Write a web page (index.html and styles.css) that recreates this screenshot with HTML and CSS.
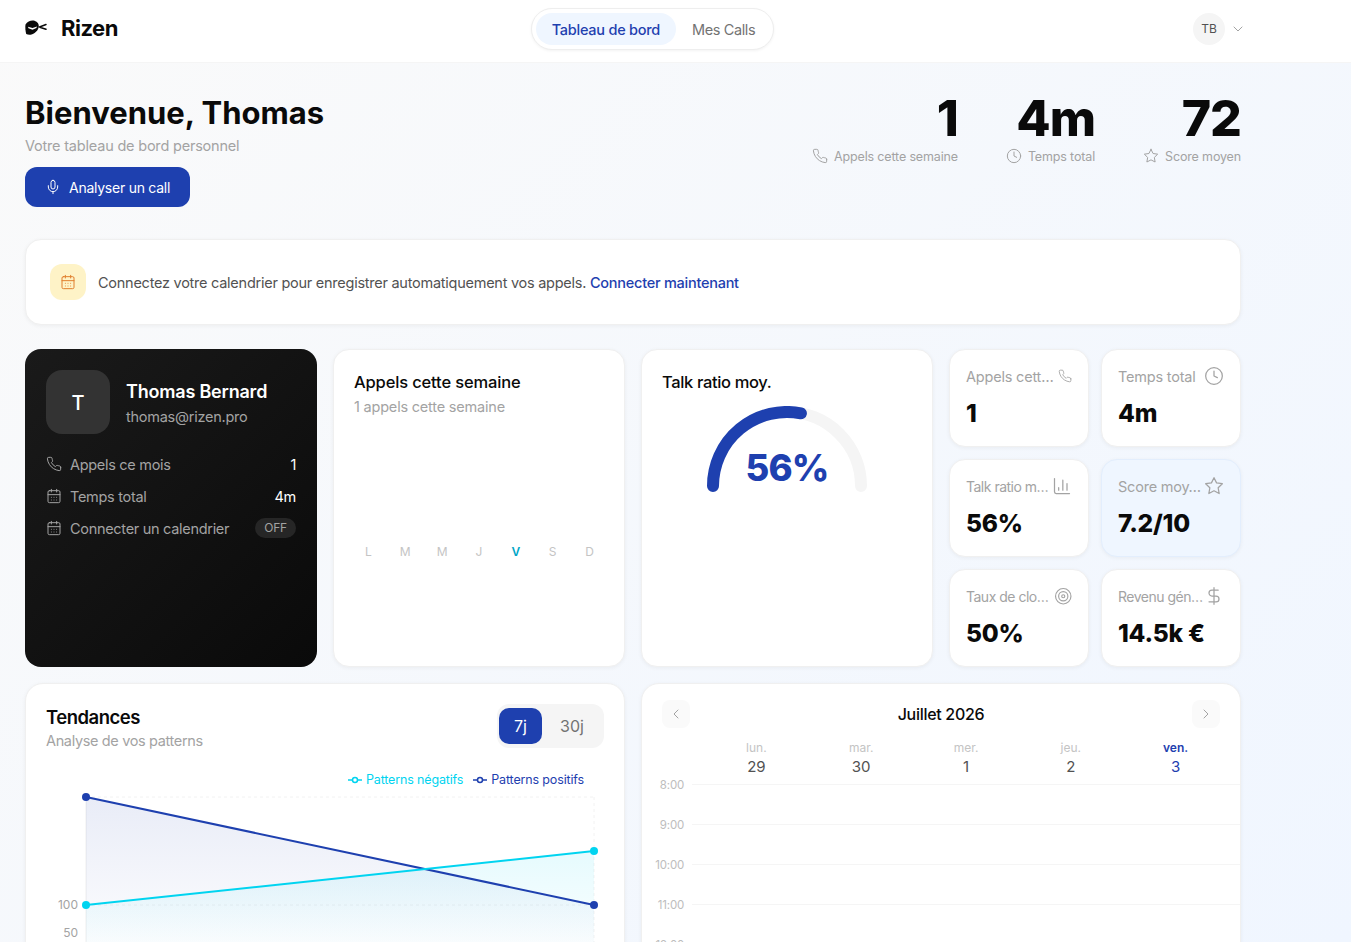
FILE: index.html
```html
<!DOCTYPE html>
<html lang="fr">
<head>
    <meta charset="utf-8">
    <title>Rizen - Tableau de bord</title>
    <link rel="stylesheet" href="styles.css">
</head>
<body>
    <!-- Icon set -->
    <svg class="icon-defs" width="0" height="0">
        <symbol id="i-phone" viewBox="0 0 24 24"><path d="M22 16.92v3a2 2 0 0 1-2.18 2 19.79 19.79 0 0 1-8.63-3.07 19.5 19.5 0 0 1-6-6 19.79 19.79 0 0 1-3.07-8.67A2 2 0 0 1 4.11 2h3a2 2 0 0 1 2 1.72 12.84 12.84 0 0 0 .7 2.81 2 2 0 0 1-.45 2.11L8.09 9.91a16 16 0 0 0 6 6l1.27-1.27a2 2 0 0 1 2.11-.45 12.84 12.84 0 0 0 2.81.7A2 2 0 0 1 22 16.92z"/></symbol>
        <symbol id="i-clock" viewBox="0 0 24 24"><circle cx="12" cy="12" r="10"/><path d="M12 6v6l4 2"/></symbol>
        <symbol id="i-star" viewBox="0 0 24 24"><path d="M12 2l3.09 6.26L22 9.27l-5 4.87 1.18 6.88L12 17.77l-6.18 3.25L7 14.14 2 9.27l6.91-1.01L12 2z"/></symbol>
        <symbol id="i-mic" viewBox="0 0 24 24"><path d="M12 2a3 3 0 0 0-3 3v7a3 3 0 0 0 6 0V5a3 3 0 0 0-3-3z"/><path d="M19 10v2a7 7 0 0 1-14 0v-2"/><path d="M12 19v3"/></symbol>
        <symbol id="i-calendar" viewBox="0 0 24 24"><path d="M8 2v4M16 2v4"/><rect x="3" y="4" width="18" height="18" rx="2"/><path d="M3 10h18M8 14h.01M12 14h.01M16 14h.01M8 18h.01M12 18h.01M16 18h.01"/></symbol>
        <symbol id="i-chart" viewBox="0 0 24 24"><path d="M3 3v16a2 2 0 0 0 2 2h16M18 17V9M13 17V5M8 17v-3"/></symbol>
        <symbol id="i-target" viewBox="0 0 24 24"><circle cx="12" cy="12" r="10"/><circle cx="12" cy="12" r="6"/><circle cx="12" cy="12" r="2"/></symbol>
        <symbol id="i-dollar" viewBox="0 0 24 24"><path d="M12 2v20M17 5H9.5a3.5 3.5 0 0 0 0 7h5a3.5 3.5 0 0 1 0 7H6"/></symbol>
        <symbol id="i-down" viewBox="0 0 24 24"><path d="M6 9l6 6 6-6"/></symbol>
        <symbol id="i-left" viewBox="0 0 24 24"><path d="M15 18l-6-6 6-6"/></symbol>
        <symbol id="i-right" viewBox="0 0 24 24"><path d="M9 18l6-6-6-6"/></symbol>
    </svg>

    <div class="page">
        <header class="topbar">
            <div class="brand">
                <svg class="brand-logo" viewBox="0 0 22 16" width="22" height="16">
                    <path d="M.5 4.500C2.500 1.200 6.500 0 9.500 .8c3 .8 4.500 3.300 4.300 5.700-.3 3.500-3.500 6.700-7.300 8-2 .5-3.800.2-5.300-.5C.5 11 0 7.500.5 4.500z" fill="#0a0a0a"/>
                    <path d="M3 6.800l4.500 1.300 4.500-1.600-.6 1.600L7.500 9.700 3.500 8.300z" fill="#fff"/>
                    <path d="M14.500 7L21 4.500M15.500 7.500l5.500 1.700" fill="none" stroke="#0a0a0a" stroke-width="1.500" stroke-linecap="round"/>
                </svg>
                <span class="brand-name">Rizen</span>
            </div>
            <nav class="main-nav">
                <a class="nav-item active">Tableau de bord</a>
                <a class="nav-item">Mes Calls</a>
            </nav>
            <div class="user-menu">
                <div class="user-avatar">TB</div>
                <svg class="icon chevron"><use href="#i-down"/></svg>
            </div>
        </header>

        <main class="content">
            <section class="hero">
                <div class="hero-left">
                    <h1>Bienvenue, Thomas</h1>
                    <p class="hero-sub">Votre tableau de bord personnel</p>
                    <button class="btn-primary"><svg class="icon"><use href="#i-mic"/></svg>Analyser un call</button>
                </div>
                <div class="hero-stats">
                    <div class="hero-stat">
                        <div class="hero-value">1</div>
                        <div class="hero-label"><svg class="icon"><use href="#i-phone"/></svg>Appels cette semaine</div>
                    </div>
                    <div class="hero-stat">
                        <div class="hero-value">4m</div>
                        <div class="hero-label"><svg class="icon"><use href="#i-clock"/></svg>Temps total</div>
                    </div>
                    <div class="hero-stat">
                        <div class="hero-value">72</div>
                        <div class="hero-label"><svg class="icon"><use href="#i-star"/></svg>Score moyen</div>
                    </div>
                </div>
            </section>

            <section class="card banner">
                <div class="banner-icon"><svg class="icon"><use href="#i-calendar"/></svg></div>
                <p>Connectez votre calendrier pour enregistrer automatiquement vos appels. <a href="#">Connecter maintenant</a></p>
            </section>

            <section class="top-grid">
                <div class="profile-card">
                    <div class="profile-head">
                        <div class="profile-avatar">T</div>
                        <div class="profile-info">
                            <div class="profile-name">Thomas Bernard</div>
                            <div class="profile-mail">thomas@rizen.pro</div>
                        </div>
                    </div>
                    <div class="profile-row">
                        <svg class="icon"><use href="#i-phone"/></svg><span class="row-label">Appels ce mois</span><span class="row-value">1</span>
                    </div>
                    <div class="profile-row">
                        <svg class="icon"><use href="#i-calendar"/></svg><span class="row-label">Temps total</span><span class="row-value">4m</span>
                    </div>
                    <div class="profile-row">
                        <svg class="icon"><use href="#i-calendar"/></svg><span class="row-label">Connecter un calendrier</span><span class="row-badge">OFF</span>
                    </div>
                </div>

                <div class="card week-card">
                    <h3>Appels cette semaine</h3>
                    <p class="card-sub">1 appels cette semaine</p>
                    <div class="week-days">
                        <span>L</span><span>M</span><span>M</span><span>J</span><span class="today">V</span><span>S</span><span>D</span>
                    </div>
                </div>

                <div class="card gauge-card">
                    <h3>Talk ratio moy.</h3>
                    <div class="gauge">
                        <svg viewBox="0 0 172 86" width="172" height="86">
                            <path d="M12 80A74 74 0 0 1 160 80" fill="none" stroke="#f5f5f5" stroke-width="12" stroke-linecap="round"/>
                            <path d="M12 80A74 74 0 0 1 99.900 7.300" fill="none" stroke="#1e40af" stroke-width="12" stroke-linecap="round"/>
                        </svg>
                        <div class="gauge-value">56%</div>
                    </div>
                </div>

                <div class="mini-grid">
                    <div class="card mini-card">
                        <div class="mini-top"><span class="mini-label">Appels cett…</span><svg class="icon icon-sm"><use href="#i-phone"/></svg></div>
                        <div class="mini-value">1</div>
                    </div>
                    <div class="card mini-card">
                        <div class="mini-top"><span class="mini-label">Temps total</span><svg class="icon"><use href="#i-clock"/></svg></div>
                        <div class="mini-value">4m</div>
                    </div>
                    <div class="card mini-card">
                        <div class="mini-top"><span class="mini-label tight">Talk ratio m…</span><svg class="icon"><use href="#i-chart"/></svg></div>
                        <div class="mini-value">56%</div>
                    </div>
                    <div class="card mini-card tinted">
                        <div class="mini-top"><span class="mini-label">Score moy…</span><svg class="icon"><use href="#i-star"/></svg></div>
                        <div class="mini-value">7.2/10</div>
                    </div>
                    <div class="card mini-card">
                        <div class="mini-top"><span class="mini-label tight">Taux de clo…</span><svg class="icon icon-md"><use href="#i-target"/></svg></div>
                        <div class="mini-value">50%</div>
                    </div>
                    <div class="card mini-card">
                        <div class="mini-top"><span class="mini-label tight">Revenu gén…</span><svg class="icon"><use href="#i-dollar"/></svg></div>
                        <div class="mini-value">14.5k €</div>
                    </div>
                </div>
            </section>

            <section class="bottom-grid">
                <div class="card trend-card">
                    <div class="trend-head">
                        <div>
                            <h2>Tendances</h2>
                            <p class="card-sub">Analyse de vos patterns</p>
                        </div>
                        <div class="range-toggle">
                            <span class="range active">7j</span>
                            <span class="range">30j</span>
                        </div>
                    </div>
                    <div class="legend">
                        <span class="legend-item neg"><svg width="14" height="8" viewBox="0 0 14 8"><path d="M0 4h14" stroke="currentColor" stroke-width="1.500"/><circle cx="7" cy="4" r="2.500" fill="#fff" stroke="currentColor" stroke-width="1.500"/></svg>Patterns négatifs</span>
                        <span class="legend-item pos"><svg width="14" height="8" viewBox="0 0 14 8"><path d="M0 4h14" stroke="currentColor" stroke-width="1.500"/><circle cx="7" cy="4" r="2.500" fill="#fff" stroke="currentColor" stroke-width="1.500"/></svg>Patterns positifs</span>
                    </div>
                    <svg class="trend-chart" viewBox="0 0 558 200" width="558" height="200">
                        <defs>
                            <linearGradient id="fill-pos" x1="0" y1="0" x2="0" y2="1">
                                <stop offset="0" stop-color="#1e40af" stop-opacity="0.1"/>
                                <stop offset="1" stop-color="#1e40af" stop-opacity="0"/>
                            </linearGradient>
                            <linearGradient id="fill-neg" x1="0" y1="0" x2="0" y2="1">
                                <stop offset="0" stop-color="#00d4f0" stop-opacity="0.1"/>
                                <stop offset="1" stop-color="#00d4f0" stop-opacity="0"/>
                            </linearGradient>
                        </defs>
                        <g stroke="#f2f2f2" stroke-dasharray="3 3" fill="none">
                            <path d="M40 7H548M40 115H548M548 7V171"/>
                        </g>
                        <path d="M40 7V200" stroke="#eeeeee"/>
                        <path d="M40 7L548 115V171H40z" fill="url(#fill-pos)"/>
                        <path d="M40 115L548 61V171H40z" fill="url(#fill-neg)"/>
                        <path d="M40 7L548 115" stroke="#1e40af" stroke-width="2" fill="none"/>
                        <path d="M40 115L548 61" stroke="#00d4f0" stroke-width="2" fill="none"/>
                        <circle cx="40" cy="7" r="4" fill="#1e40af"/>
                        <circle cx="548" cy="115" r="4" fill="#1e40af"/>
                        <circle cx="40" cy="115" r="4" fill="#00d4f0"/>
                        <circle cx="548" cy="61" r="4" fill="#00d4f0"/>
                        <text class="axis" x="32" y="119" text-anchor="end">100</text>
                        <text class="axis" x="32" y="147" text-anchor="end">50</text>
                    </svg>
                </div>

                <div class="card calendar-card">
                    <div class="cal-head">
                        <button class="cal-nav"><svg class="icon"><use href="#i-left"/></svg></button>
                        <span class="cal-title">Juillet 2026</span>
                        <button class="cal-nav"><svg class="icon"><use href="#i-right"/></svg></button>
                    </div>
                    <div class="cal-days">
                        <div class="cal-day"><span>lun.</span><b>29</b></div>
                        <div class="cal-day"><span>mar.</span><b>30</b></div>
                        <div class="cal-day"><span>mer.</span><b>1</b></div>
                        <div class="cal-day"><span>jeu.</span><b>2</b></div>
                        <div class="cal-day today"><span>ven.</span><b>3</b></div>
                    </div>
                    <div class="cal-hour"><span>8:00</span></div>
                    <div class="cal-hour"><span>9:00</span></div>
                    <div class="cal-hour"><span>10:00</span></div>
                    <div class="cal-hour"><span>11:00</span></div>
                    <div class="cal-hour"><span>12:00</span></div>
                </div>
            </section>
        </main>
    </div>
</body>
</html>
```

FILE: styles.css
```css
* {
    box-sizing: border-box;
}

html, body {
    margin: 0;
    height: 100%;
    overflow: hidden;
}

body {
    font-family: Inter, "Liberation Sans", sans-serif;
    color: #0a0a0a;
    background: linear-gradient(135deg, #fafafa 0%, #f0f6ff 100%);
}

h1, h2, h3, p {
    margin: 0;
}

.icon-defs {
    position: absolute;
}

.icon {
    width: 16px;
    height: 16px;
    flex-shrink: 0;
    fill: none;
    stroke: currentColor;
    stroke-width: 1.5;
    stroke-linecap: round;
    stroke-linejoin: round;
}

.page {
    height: 942px;
    overflow: hidden;
}

/* Top bar */
.topbar {
    display: flex;
    align-items: center;
    justify-content: space-between;
    height: 63px;
    padding: 0 105px 5px 25px;
    background: #fff;
    border-bottom: 1px solid #f5f5f5;
}

.brand {
    display: flex;
    align-items: center;
    gap: 14px;
    margin-bottom: 2px;
}

.brand-logo {
    display: block;
}

.brand-name {
    font-size: 22px;
    font-weight: 700;
    letter-spacing: -0.5px;
}

.main-nav {
    display: flex;
    margin-right: 6px;
    padding: 4px;
    background: #fff;
    border: 1px solid #eeeeee;
    border-radius: 21px;
    box-shadow: 0 1px 3px rgba(0,0,0,0.05);
}

.nav-item {
    height: 32px;
    line-height: 33px;
    padding: 0 14px 0 16px;
    font-size: 14.5px;
    letter-spacing: -0.4px;
    color: #737373;
    border-radius: 16px;
}

.nav-item.active {
    padding: 0 16px;
    letter-spacing: -0.25px;
    background: #eff6ff;
    color: #1e40af;
    font-weight: 500;
}

.user-menu {
    display: flex;
    align-items: center;
    gap: 5px;
}

.user-avatar {
    width: 32px;
    height: 32px;
    border-radius: 50%;
    background: #f5f5f5;
    color: #525252;
    font-size: 12px;
    line-height: 32px;
    text-align: center;
}

.chevron {
    color: #a3a3a3;
}

/* Main */
.content {
    padding: 32px 110px 0 25px;
}

.hero {
    display: flex;
    justify-content: space-between;
}

h1 {
    font-size: 31px;
    line-height: 36px;
    font-weight: 700;
}

.hero-sub {
    margin-top: 5px;
    font-size: 14.5px;
    line-height: 20px;
    letter-spacing: -0.2px;
    color: #a3a3a3;
}

.btn-primary {
    display: flex;
    align-items: center;
    gap: 8px;
    height: 40px;
    margin-top: 11px;
    padding: 0 20px;
    border: none;
    border-radius: 12px;
    background: #1e40af;
    color: #fff;
    font-family: inherit;
    font-size: 14px;
    letter-spacing: -0.25px;
}

.hero-stats {
    display: flex;
    gap: 48px;
}

.hero-stat {
    text-align: right;
}

.hero-value {
    font-size: 50px;
    line-height: 46px;
    font-weight: 800;
    letter-spacing: -1px;
}

.hero-label {
    display: flex;
    align-items: center;
    gap: 6px;
    margin-top: 7px;
    font-size: 12.5px;
    letter-spacing: -0.15px;
    color: #a3a3a3;
}

/* Cards */
.card {
    background: #fff;
    border: 1px solid #f0f0f0;
    border-radius: 16px;
    box-shadow: 0 1px 4px rgba(0,0,0,0.05);
}

.banner {
    display: flex;
    align-items: center;
    gap: 12px;
    height: 86px;
    margin-top: 32px;
    padding: 0 24px;
    font-size: 14.5px;
    letter-spacing: -0.255px;
    color: #525252;
}

.banner a {
    color: #1e40af;
    font-weight: 500;
    text-decoration: none;
}

.banner-icon {
    display: flex;
    align-items: center;
    justify-content: center;
    width: 36px;
    height: 36px;
    border-radius: 12px;
    background: #fef3c7;
    color: #e07f2e;
}

.top-grid {
    display: grid;
    grid-template-columns: repeat(4, 292px);
    gap: 16px;
    height: 318px;
    margin-top: 24px;
}

.profile-card {
    padding: 21px;
    border-radius: 16px;
    background: linear-gradient(135deg, #1a1a1a 0%, #0a0a0a 100%);
    color: #fff;
}

.profile-head {
    display: flex;
    align-items: center;
    gap: 16px;
    margin-bottom: 14px;
}

.profile-avatar {
    width: 64px;
    height: 64px;
    border-radius: 16px;
    background: #333;
    font-size: 20px;
    font-weight: 500;
    line-height: 66px;
    text-align: center;
}

.profile-info {
    padding-top: 1px;
}

.profile-name {
    font-size: 18px;
    line-height: 28px;
    font-weight: 600;
    letter-spacing: -0.2px;
}

.profile-mail {
    margin-top: 1px;
    font-size: 14.5px;
    line-height: 20px;
    color: #a3a3a3;
    letter-spacing: -0.25px;
}

.profile-row {
    display: flex;
    align-items: center;
    gap: 8px;
    height: 32px;
    font-size: 14.5px;
    letter-spacing: -0.3px;
    color: #a3a3a3;
}

.row-label {
    flex: 1;
}

.row-value {
    color: #fff;
}

.row-badge {
    width: 41px;
    height: 20px;
    line-height: 20px;
    border-radius: 10px;
    background: #262626;
    font-size: 12px;
    text-align: center;
}

.week-card, .gauge-card {
    padding: 19px 20px;
}

h3 {
    font-size: 16.5px;
    line-height: 26px;
    font-weight: 500;
    letter-spacing: -0.15px;
}

.gauge-card h3 {
    letter-spacing: -0.35px;
}

.card-sub {
    font-size: 14.5px;
    line-height: 20px;
    letter-spacing: -0.2px;
    color: #a3a3a3;
}

.week-card .card-sub {
    margin-top: 2px;
}

.week-days {
    display: grid;
    grid-template-columns: repeat(7, 1fr);
    margin: 127px -4px 0;
    font-size: 12px;
    line-height: 16px;
    text-align: center;
    color: #c4c4c4;
}

.week-days .today {
    color: #00a6c7;
    font-weight: 600;
}

.gauge {
    position: relative;
    width: 172px;
    margin: 11px auto 0;
}

.gauge svg {
    display: block;
}

.gauge-value {
    position: absolute;
    left: 0;
    right: 0;
    top: 37px;
    text-align: center;
    font-size: 36.5px;
    line-height: 50px;
    font-weight: 800;
    letter-spacing: -0.8px;
    color: #1e40af;
}

.mini-grid {
    display: grid;
    grid-template-columns: repeat(2, 140px);
    grid-template-rows: repeat(3, 98px);
    gap: 12px;
}

.mini-card {
    padding: 14px 16px;
}

.mini-card.tinted {
    background: #eff6ff;
    border-color: #e3eefd;
}

.mini-top {
    display: flex;
    align-items: center;
    justify-content: space-between;
    height: 24px;
    color: #a3a3a3;
}

.mini-label {
    white-space: nowrap;
    font-size: 14.5px;
    letter-spacing: -0.2px;
}

.mini-label.tight {
    font-size: 14px;
    letter-spacing: -0.5px;
}

.mini-top .icon {
    width: 20px;
    height: 20px;
}

.mini-top .icon-sm {
    width: 14px;
    height: 14px;
}

.mini-top .icon-md {
    width: 18.500px;
    height: 18.500px;
}

.mini-value {
    margin-top: 9px;
    font-size: 24.5px;
    line-height: 32px;
    font-weight: 800;
    letter-spacing: -0.2px;
}

/* Bottom row */
.bottom-grid {
    display: grid;
    grid-template-columns: repeat(2, 600px);
    gap: 16px;
    margin-top: 16px;
}

.trend-card {
    padding: 20px;
    height: 400px;
    border-radius: 18px;
}

.trend-head {
    display: flex;
    justify-content: space-between;
}

h2 {
    font-size: 18.5px;
    line-height: 26px;
    font-weight: 600;
    letter-spacing: -0.5px;
}

.trend-head .card-sub {
    margin-top: 1px;
    letter-spacing: -0.35px;
}

.range-toggle {
    display: flex;
    width: 107px;
    height: 44px;
    padding: 4px 2px;
    border-radius: 12px;
    background: #f5f5f5;
}

.range {
    flex: 1;
    border-radius: 10px;
    font-size: 16px;
    line-height: 36px;
    text-align: center;
    color: #737373;
}

.range.active {
    flex: none;
    width: 43px;
    background: #1e40af;
    color: #fff;
}

.legend {
    display: flex;
    justify-content: flex-end;
    gap: 10px;
    padding-right: 20px;
    margin-top: 21px;
    font-size: 12.5px;
    line-height: 16px;
    letter-spacing: -0.15px;
}

.legend-item {
    display: flex;
    align-items: center;
    gap: 4px;
}

.legend .neg {
    color: #00d4f0;
}

.legend .pos {
    color: #1e40af;
}

.trend-chart {
    display: block;
    margin-top: 2px;
}

.axis {
    font-size: 12px;
    fill: #a3a3a3;
}

.calendar-card {
    height: 400px;
    overflow: hidden;
    padding: 16px 0 0 20px;
    border-radius: 18px;
}

.cal-head {
    display: flex;
    align-items: center;
    justify-content: space-between;
    padding-right: 20px;
}

.cal-title {
    font-size: 16px;
    font-weight: 500;
    letter-spacing: -0.3px;
}

.cal-nav {
    display: flex;
    align-items: center;
    justify-content: center;
    width: 28px;
    height: 28px;
    padding: 0;
    border: none;
    border-radius: 8px;
    background: #fafafa;
    color: #a3a3a3;
}

.cal-days {
    display: grid;
    grid-template-columns: repeat(5, 104.8px);
    margin: 12px 0 0 42px;
    text-align: center;
}

.cal-day {
    height: 44px;
}

.cal-day span {
    display: block;
    font-size: 12px;
    line-height: 16px;
    color: #c4c4c4;
}

.cal-day b {
    display: block;
    margin-top: 1px;
    font-size: 15px;
    line-height: 20px;
    font-weight: 400;
    color: #525252;
}

.cal-day.today span {
    color: #1e40af;
    font-weight: 600;
}

.cal-day.today b {
    color: #1e40af;
}

.cal-hour {
    height: 40px;
    margin-left: 30px;
    border-top: 1px solid #f5f5f5;
}

.cal-hour span {
    display: block;
    width: 52px;
    margin: -7px 0 0 -60px;
    font-size: 11.5px;
    letter-spacing: -0.2px;
    line-height: 14px;
    text-align: right;
    color: #bdbdbd;
}
```
